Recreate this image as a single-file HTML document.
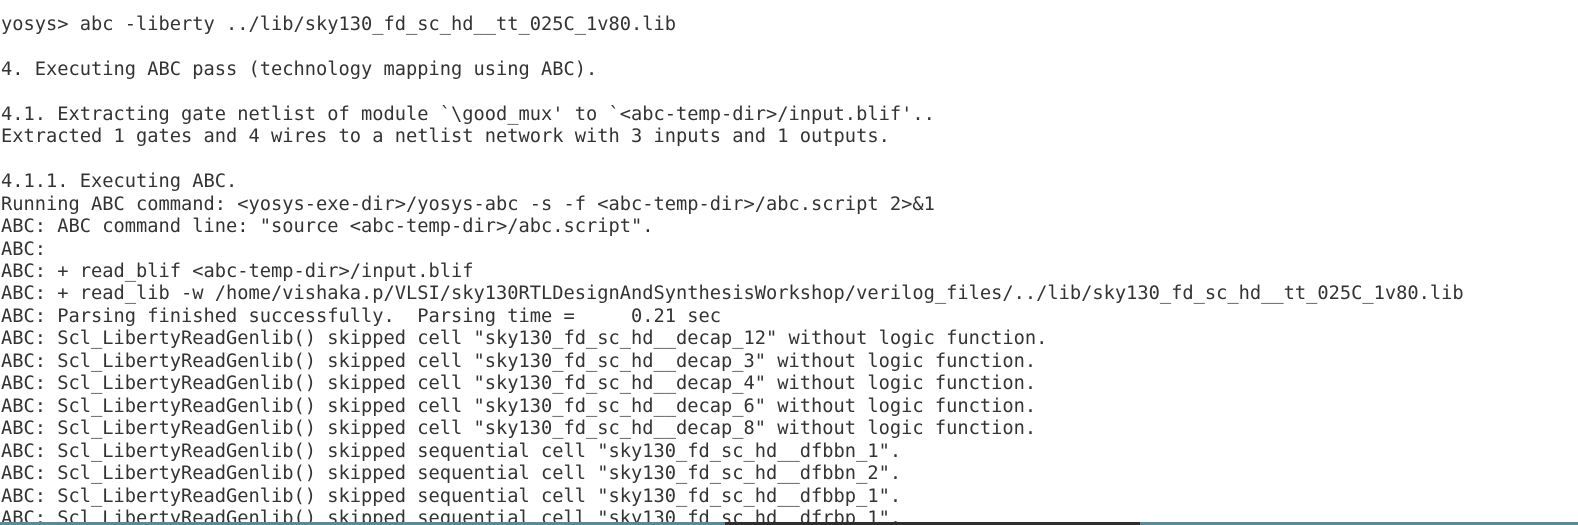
<!DOCTYPE html>
<html><head><meta charset="utf-8"><style>
html,body{margin:0;padding:0;background:#fff;width:1578px;height:525px;overflow:hidden;position:relative}
pre{margin:0;position:absolute;left:1px;top:14px;font-family:"DejaVu Sans Mono","Liberation Mono",monospace;font-size:18.7px;line-height:22.45px;color:#333;white-space:pre}
.b1{position:absolute;left:0;bottom:0;width:1578px;height:3px;background:#5a8a96}
.b2{position:absolute;left:725px;bottom:0;width:415px;height:3px;background:#2e2e2e}
</style></head><body>
<pre>yosys&gt; abc -liberty ../lib/sky130_fd_sc_hd__tt_025C_1v80.lib

4. Executing ABC pass (technology mapping using ABC).

4.1. Extracting gate netlist of module `\good_mux' to `&lt;abc-temp-dir&gt;/input.blif'..
Extracted 1 gates and 4 wires to a netlist network with 3 inputs and 1 outputs.

4.1.1. Executing ABC.
Running ABC command: &lt;yosys-exe-dir&gt;/yosys-abc -s -f &lt;abc-temp-dir&gt;/abc.script 2&gt;&amp;1
ABC: ABC command line: "source &lt;abc-temp-dir&gt;/abc.script".
ABC:
ABC: + read_blif &lt;abc-temp-dir&gt;/input.blif
ABC: + read_lib -w /home/vishaka.p/VLSI/sky130RTLDesignAndSynthesisWorkshop/verilog_files/../lib/sky130_fd_sc_hd__tt_025C_1v80.lib
ABC: Parsing finished successfully.  Parsing time =     0.21 sec
ABC: Scl_LibertyReadGenlib() skipped cell "sky130_fd_sc_hd__decap_12" without logic function.
ABC: Scl_LibertyReadGenlib() skipped cell "sky130_fd_sc_hd__decap_3" without logic function.
ABC: Scl_LibertyReadGenlib() skipped cell "sky130_fd_sc_hd__decap_4" without logic function.
ABC: Scl_LibertyReadGenlib() skipped cell "sky130_fd_sc_hd__decap_6" without logic function.
ABC: Scl_LibertyReadGenlib() skipped cell "sky130_fd_sc_hd__decap_8" without logic function.
ABC: Scl_LibertyReadGenlib() skipped sequential cell "sky130_fd_sc_hd__dfbbn_1".
ABC: Scl_LibertyReadGenlib() skipped sequential cell "sky130_fd_sc_hd__dfbbn_2".
ABC: Scl_LibertyReadGenlib() skipped sequential cell "sky130_fd_sc_hd__dfbbp_1".
ABC: Scl_LibertyReadGenlib() skipped sequential cell "sky130_fd_sc_hd__dfrbp_1".</pre>
<div class="b1"></div><div class="b2"></div>
</body></html>
